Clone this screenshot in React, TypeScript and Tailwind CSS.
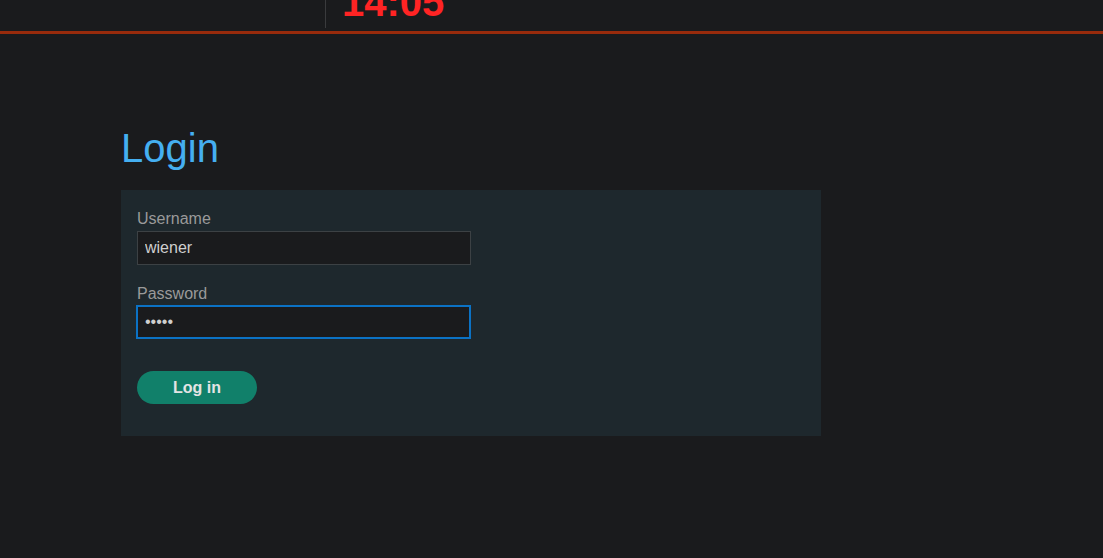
import { useState } from 'react'

export default function App() {
    const [username, setUsername] = useState('wiener')
    const [password, setPassword] = useState('peter')

    return (
        <div className="min-h-[558px] bg-[#1a1b1d] font-['Liberation_Sans',Arial,sans-serif] overflow-hidden">
            {/* Header (scrolled, timer cut off) */}
            <div className="flex h-[31px] border-b-[3px] border-[#982b0c] box-content">
                <div className="w-[325px] shrink-0" />
                <div className="w-px h-[28px] bg-[#3a3b3d]" />
                <div className="pl-[16px] -mt-[18px] text-[40px] leading-[40px] font-bold text-[#ff2424]">14:05</div>
            </div>

            {/* Login */}
            <div className="pl-[121px] pt-[91px]">
                <h1 className="text-[40px] leading-[46px] text-[#45aff1] font-normal">Login</h1>
                <form
                    onSubmit={(e) => e.preventDefault()}
                    className="mt-[19px] w-[700px] bg-[#1e282d] pl-4 pt-[20px] pb-[32px]"
                >
                    <label className="block text-[16px] leading-[18px] text-[#9a9a9a]">Username</label>
                    <input
                        value={username}
                        onChange={(e) => setUsername(e.target.value)}
                        className="mt-[3px] block w-[334px] h-[34px] bg-[#1a1b1d] border border-[#3c4144] px-[7px] text-[16px] text-[#cfcfcf] outline-none"
                    />
                    <label className="block mt-[20px] text-[16px] leading-[18px] text-[#9a9a9a]">Password</label>
                    <input
                        type="password"
                        value={password}
                        onChange={(e) => setPassword(e.target.value)}
                        className="mt-[2px] block w-[335px] h-[34px] bg-[#1a1b1d] border-2 border-[#0b72c4] -ml-px px-[7px] text-[16px] text-[#cfcfcf] outline-none"
                    />
                    <button
                        type="submit"
                        className="mt-[32px] block w-[120px] h-[33px] rounded-full bg-[#11806a] text-[16px] font-bold text-[#e4e4e4]"
                    >
                        Log in
                    </button>
                </form>
            </div>
        </div>
    )
}
